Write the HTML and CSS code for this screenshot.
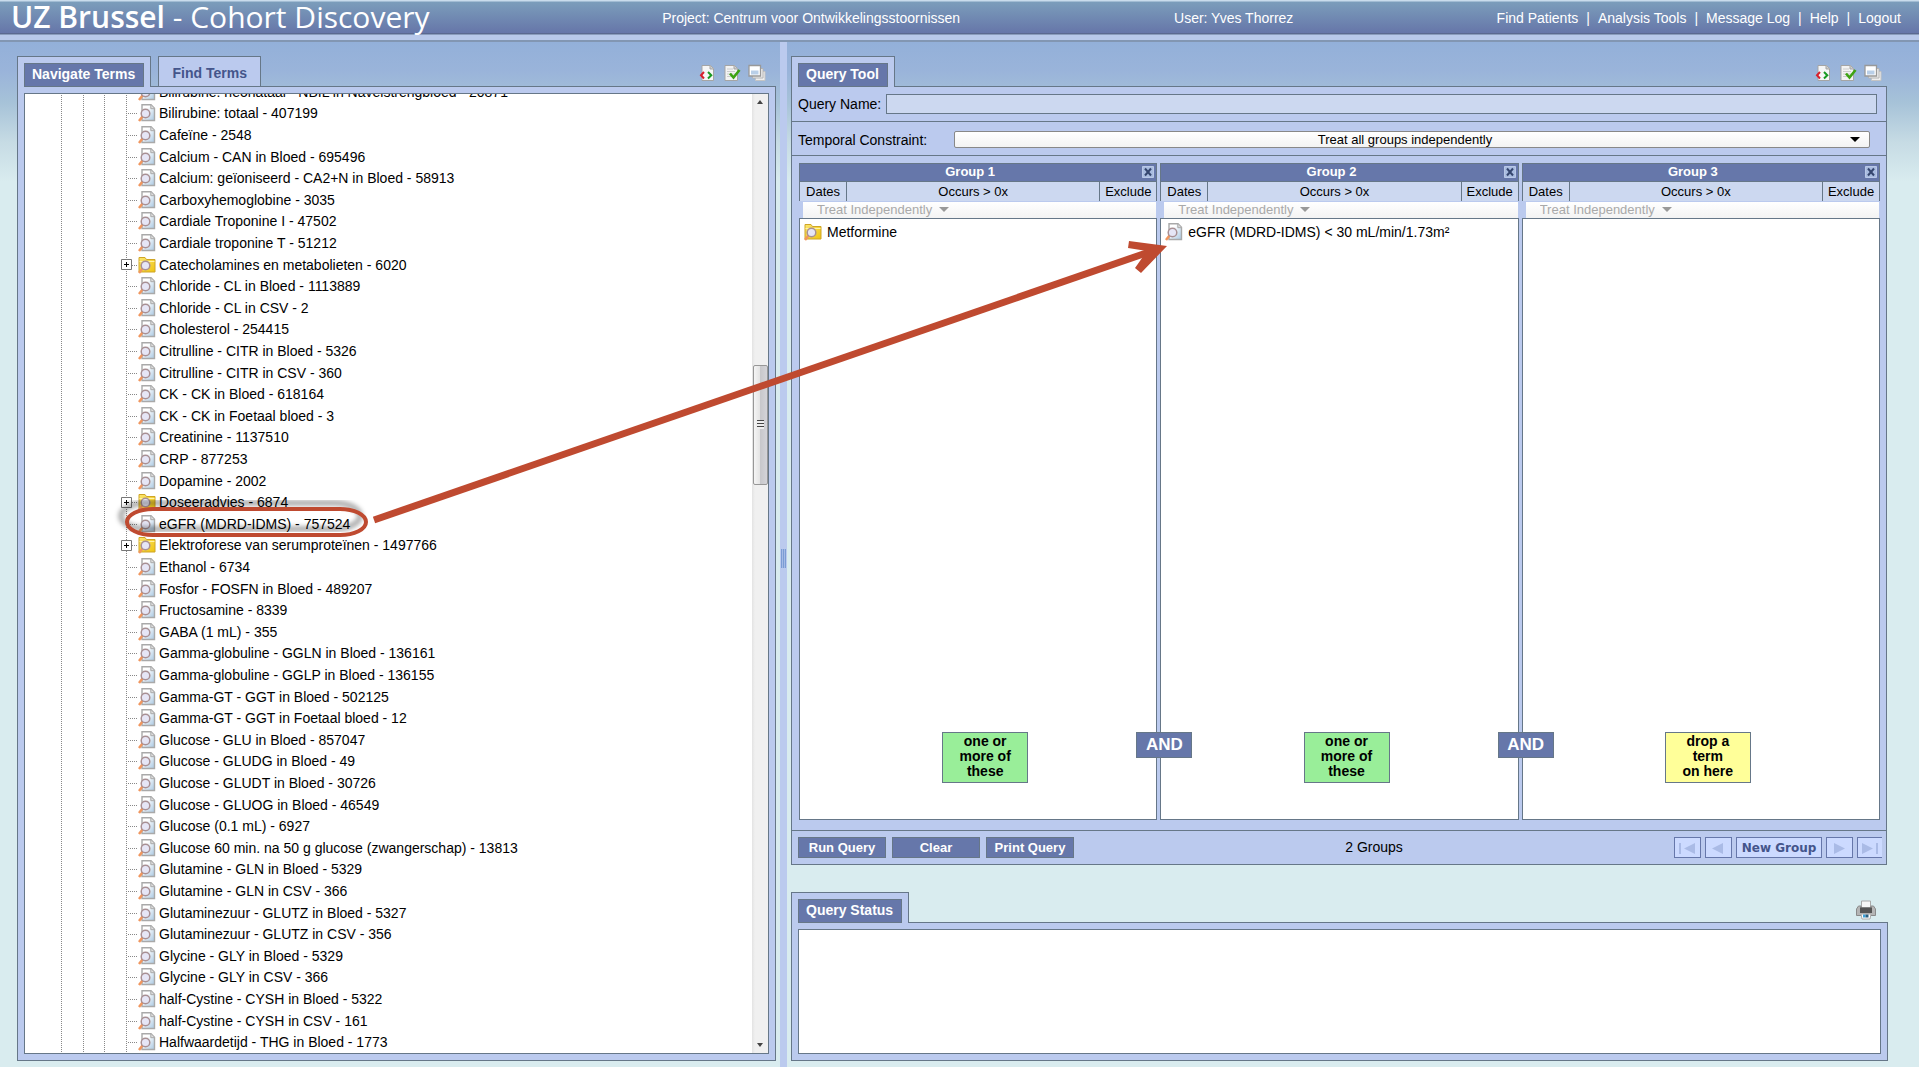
FILE: index.html
```html
<!DOCTYPE html>
<html lang="en">
<head>
<meta charset="utf-8">
<title>UZ Brussel - Cohort Discovery</title>
<link rel="stylesheet" href="styles.css">
</head>
<body>
<svg class="defs" aria-hidden="true">
  <defs>
    <linearGradient id="sheet" x1="0" y1="0" x2="1" y2="1"><stop offset=".3" stop-color="#fff"/><stop offset="1" stop-color="#a9c8e2"/></linearGradient>
    <linearGradient id="gold" x1="0" y1="0" x2="1" y2="1"><stop offset="0" stop-color="#fbe670"/><stop offset="1" stop-color="#efc410"/></linearGradient>
    <symbol id="lens" viewBox="0 0 18 18">
      <path d="M4.500 12.500 1 17" stroke="#f0965e" stroke-width="2.500"/>
      <circle cx="7.500" cy="9.500" r="4.300" fill="#e6e6f6" stroke="#a89094" stroke-width="1.500"/>
    </symbol>
    <symbol id="leaf" viewBox="0 0 18 18">
      <path d="M4 .8h9l3.500 3.500v12.200H4z" fill="url(#sheet)" stroke="#a9a9a9" stroke-width="1.400"/>
      <path d="M12.800 1v3.700h3.700" fill="#ddd" stroke="#a9a9a9"/>
      <use href="#lens"/>
    </symbol>
    <symbol id="folder" viewBox="0 0 18 18">
      <path d="M1 16V1.500h6l1.500 2h8.500V16z" fill="url(#gold)" stroke="#cfa526"/>
      <path d="M1.500 5.500h15" stroke="#fff3a8"/>
      <use href="#lens"/>
    </symbol>
    <symbol id="plus" viewBox="0 0 11 11">
      <path d="M.5.5h10v10H.5z" fill="#fff" stroke="#777"/><path d="M3 5.500h5M5.500 3v5" stroke="#000"/>
    </symbol>
    <symbol id="xml" viewBox="0 0 18 18">
      <path d="M4 1.500h8.500l3 3v12H4z" fill="#f6f6f6" stroke="#a5a5a5"/><path d="M12 1.500V5h3.500" fill="#ccc" stroke="#a5a5a5"/>
      <path d="M6 8 3 11.200 6 14.500" fill="none" stroke="#d8202c" stroke-width="2"/><path d="m10 8 3.300 3.200L10 14.500" fill="none" stroke="#189a20" stroke-width="2"/>
    </symbol>
    <symbol id="check" viewBox="0 0 18 18">
      <path d="M2 1.500h9.500l3 3v12H2z" fill="#f3f3f3" stroke="#a5a5a5"/><path d="M4 5h6M4 7.500h8M4 10h8M4 12.500h8" stroke="#ccc"/><path d="M11 1.500V5h3.500" fill="#ccc" stroke="#a5a5a5"/>
      <path d="m7 9.500 3.500 4L16.500 6" fill="none" stroke="#3da313" stroke-width="2.600"/>
    </symbol>
    <symbol id="stack" viewBox="0 0 18 18">
      <path d="M7.500 7.500h9.500v9H7.500z" fill="#eee" stroke="#c4c4c4"/><path d="M4.500 4.500h10.500v9.500H4.500z" fill="#eee" stroke="#b4b4b4"/>
      <path d="M1 1.500h11.500v10.500H1z" fill="#fff" stroke="#999" stroke-width="1.300"/><path d="M3 6.500h7.500v4H3z" fill="#b9cfe8"/>
    </symbol>
    <symbol id="printer" viewBox="0 0 20 20">
      <path d="M5.500 1h9v7h-9z" fill="#f7f7f7" stroke="#aaa"/>
      <path d="M2.500 6h2.500v2h10V6h2.500l2 3v6.500H.5V9z" fill="#b5b5b5" stroke="#8a8a8a"/><path d="M4 7.500h12v5.500H4z" fill="#555"/>
      <path d="M5 14h10l-1 5H6z" fill="#fff" stroke="#aaa"/><path d="M7 14.500h2.500v3H7z" fill="#3aa0d8"/><path d="M9.500 14.500h3v3h-3z" fill="#2a5f80"/>
    </symbol>
    <symbol id="cross" viewBox="0 0 12 12">
      <path d="M.5.5h11v11H.5z" fill="#a9bce0" stroke="#b9c8e8"/><path d="m3 2.500 6 7M9 2.500l-6 7" stroke="#35466f" stroke-width="2"/>
    </symbol>
  </defs>
</svg>

<header class="topbar">
  <h1 class="brand"><b>UZ Brussel</b> - Cohort Discovery</h1>
  <p class="project">Project: Centrum voor Ontwikkelingsstoornissen</p>
  <p class="user">User: Yves Thorrez</p>
  <nav class="links"><a href="#">Find Patients</a><i>|</i><a href="#">Analysis Tools</a><i>|</i><a href="#">Message Log</a><i>|</i><a href="#">Help</a><i>|</i><a href="#">Logout</a></nav>
</header>

<main class="workspace">
  <section class="pane pane-terms">
    <div class="tabs">
      <div class="tab tab-active"><button class="tab-label">Navigate Terms</button></div>
      <button class="tab tab-idle">Find Terms</button>
      <div class="tools">
        <button aria-label="Show XML"><svg><use href="#xml"/></svg></button><button aria-label="Options"><svg><use href="#check"/></svg></button><button aria-label="Resize"><svg><use href="#stack"/></svg></button>
      </div>
    </div>
    <div class="body body-terms">
      <div class="listbox">
        <ul class="tree">
          <li><svg><use href="#leaf"/></svg>Bilirubine: neonataal - NBIL in Navelstrengbloed - 20871</li>
          <li><svg><use href="#leaf"/></svg>Bilirubine: totaal - 407199</li>
          <li><svg><use href="#leaf"/></svg>Cafeïne - 2548</li>
          <li><svg><use href="#leaf"/></svg>Calcium - CAN in Bloed - 695496</li>
          <li><svg><use href="#leaf"/></svg>Calcium: geïoniseerd - CA2+N in Bloed - 58913</li>
          <li><svg><use href="#leaf"/></svg>Carboxyhemoglobine - 3035</li>
          <li><svg><use href="#leaf"/></svg>Cardiale Troponine I - 47502</li>
          <li><svg><use href="#leaf"/></svg>Cardiale troponine T - 51212</li>
          <li><button class="expand" aria-label="Expand"><svg><use href="#plus"/></svg></button><svg><use href="#folder"/></svg>Catecholamines en metabolieten - 6020</li>
          <li><svg><use href="#leaf"/></svg>Chloride - CL in Bloed - 1113889</li>
          <li><svg><use href="#leaf"/></svg>Chloride - CL in CSV - 2</li>
          <li><svg><use href="#leaf"/></svg>Cholesterol - 254415</li>
          <li><svg><use href="#leaf"/></svg>Citrulline - CITR in Bloed - 5326</li>
          <li><svg><use href="#leaf"/></svg>Citrulline - CITR in CSV - 360</li>
          <li><svg><use href="#leaf"/></svg>CK - CK in Bloed - 618164</li>
          <li><svg><use href="#leaf"/></svg>CK - CK in Foetaal bloed - 3</li>
          <li><svg><use href="#leaf"/></svg>Creatinine - 1137510</li>
          <li><svg><use href="#leaf"/></svg>CRP - 877253</li>
          <li><svg><use href="#leaf"/></svg>Dopamine - 2002</li>
          <li><button class="expand" aria-label="Expand"><svg><use href="#plus"/></svg></button><svg><use href="#folder"/></svg>Doseeradvies - 6874</li>
          <li><svg><use href="#leaf"/></svg>eGFR (MDRD-IDMS) - 757524</li>
          <li><button class="expand" aria-label="Expand"><svg><use href="#plus"/></svg></button><svg><use href="#folder"/></svg>Elektroforese van serumproteïnen - 1497766</li>
          <li><svg><use href="#leaf"/></svg>Ethanol - 6734</li>
          <li><svg><use href="#leaf"/></svg>Fosfor - FOSFN in Bloed - 489207</li>
          <li><svg><use href="#leaf"/></svg>Fructosamine - 8339</li>
          <li><svg><use href="#leaf"/></svg>GABA (1 mL) - 355</li>
          <li><svg><use href="#leaf"/></svg>Gamma-globuline - GGLN in Bloed - 136161</li>
          <li><svg><use href="#leaf"/></svg>Gamma-globuline - GGLP in Bloed - 136155</li>
          <li><svg><use href="#leaf"/></svg>Gamma-GT - GGT in Bloed - 502125</li>
          <li><svg><use href="#leaf"/></svg>Gamma-GT - GGT in Foetaal bloed - 12</li>
          <li><svg><use href="#leaf"/></svg>Glucose - GLU in Bloed - 857047</li>
          <li><svg><use href="#leaf"/></svg>Glucose - GLUDG in Bloed - 49</li>
          <li><svg><use href="#leaf"/></svg>Glucose - GLUDT in Bloed - 30726</li>
          <li><svg><use href="#leaf"/></svg>Glucose - GLUOG in Bloed - 46549</li>
          <li><svg><use href="#leaf"/></svg>Glucose (0.1 mL) - 6927</li>
          <li><svg><use href="#leaf"/></svg>Glucose 60 min. na 50 g glucose (zwangerschap) - 13813</li>
          <li><svg><use href="#leaf"/></svg>Glutamine - GLN in Bloed - 5329</li>
          <li><svg><use href="#leaf"/></svg>Glutamine - GLN in CSV - 366</li>
          <li><svg><use href="#leaf"/></svg>Glutaminezuur - GLUTZ in Bloed - 5327</li>
          <li><svg><use href="#leaf"/></svg>Glutaminezuur - GLUTZ in CSV - 356</li>
          <li><svg><use href="#leaf"/></svg>Glycine - GLY in Bloed - 5329</li>
          <li><svg><use href="#leaf"/></svg>Glycine - GLY in CSV - 366</li>
          <li><svg><use href="#leaf"/></svg>half-Cystine - CYSH in Bloed - 5322</li>
          <li><svg><use href="#leaf"/></svg>half-Cystine - CYSH in CSV - 161</li>
          <li><svg><use href="#leaf"/></svg>Halfwaardetijd - THG in Bloed - 1773</li>
        </ul>
        <div class="scrollbar" aria-hidden="true"><span class="caret caret-up"></span><span class="track-above"></span><span class="thumb"></span><span class="track-below"></span><span class="caret caret-down"></span></div>
      </div>
    </div>
  </section>

  <div class="splitter"><span class="grip"></span></div>

  <div class="right">
    <section class="pane pane-query">
      <div class="tabs">
        <div class="tab tab-active"><button class="tab-label">Query Tool</button></div>
        <div class="tools tools-query">
          <button aria-label="Show XML"><svg><use href="#xml"/></svg></button><button aria-label="Options"><svg><use href="#check"/></svg></button><button aria-label="Resize"><svg><use href="#stack"/></svg></button>
        </div>
      </div>
      <div class="body body-query">
        <div class="field field-name"><label for="qname">Query Name:</label><input id="qname" type="text"></div>
        <div class="field field-temporal"><label for="timing">Temporal Constraint:</label>
          <span class="pick"><select id="timing"><option>Treat all groups independently</option></select></span></div>
        <div class="groups">
          <article class="group">
            <h2>Group 1<button class="close" aria-label="Remove group 1"><svg><use href="#cross"/></svg></button></h2>
            <div class="limits"><button>Dates</button><button>Occurs &gt; 0x</button><button>Exclude</button></div>
            <div class="timing"><span class="pick"><select disabled aria-label="Group 1 timing"><option>Treat Independently</option></select></span></div>
            <div class="drop"><p class="concept"><svg><use href="#folder"/></svg>Metformine</p><p class="note">one or<br>more of<br>these</p><span class="and">AND</span></div>
          </article>
          <article class="group">
            <h2>Group 2<button class="close" aria-label="Remove group 2"><svg><use href="#cross"/></svg></button></h2>
            <div class="limits"><button>Dates</button><button>Occurs &gt; 0x</button><button>Exclude</button></div>
            <div class="timing"><span class="pick"><select disabled aria-label="Group 2 timing"><option>Treat Independently</option></select></span></div>
            <div class="drop"><p class="concept"><svg><use href="#leaf"/></svg>eGFR (MDRD-IDMS) &lt; 30 mL/min/1.73m²</p><p class="note">one or<br>more of<br>these</p><span class="and">AND</span></div>
          </article>
          <article class="group">
            <h2>Group 3<button class="close" aria-label="Remove group 3"><svg><use href="#cross"/></svg></button></h2>
            <div class="limits"><button>Dates</button><button>Occurs &gt; 0x</button><button>Exclude</button></div>
            <div class="timing"><span class="pick"><select disabled aria-label="Group 3 timing"><option>Treat Independently</option></select></span></div>
            <div class="drop"><p class="note note-empty">drop a<br>term<br>on here</p></div>
          </article>
        </div>
        <div class="actions">
          <div class="run"><button>Run Query</button><button>Clear</button><button>Print Query</button></div>
          <p class="count">2 Groups</p>
          <div class="pager">
            <button aria-label="First group"><svg viewBox="0 0 24 18"><path d="M4 4h2v11H4zM20 4v11L9 9.500z"/></svg></button>
            <button aria-label="Previous group"><svg viewBox="0 0 24 18"><path d="M17 4v11L6 9.500z"/></svg></button>
            <button class="new-group">New Group</button>
            <button aria-label="Next group"><svg viewBox="0 0 24 18"><path d="M7 4v11l11-5.500z"/></svg></button>
            <button class="last" aria-label="Last group"><svg viewBox="0 0 24 18"><path d="M4 4v11l11-5.500zM18 4h2v11h-2z"/></svg></button>
          </div>
        </div>
      </div>
    </section>

    <section class="pane pane-status">
      <div class="tabs">
        <div class="tab tab-active"><button class="tab-label">Query Status</button></div>
        <div class="tools tools-status"><button aria-label="Print"><svg><use href="#printer"/></svg></button></div>
      </div>
      <div class="body body-status"><div class="output"></div></div>
    </section>
  </div>
</main>

<svg class="callout" width="1919" height="1067" viewBox="0 0 1919 1067" aria-hidden="true">
  <defs><filter id="soft"><feGaussianBlur stdDeviation="2"/></filter></defs>
  <rect x="121" y="503" width="239" height="26" rx="26" ry="13" fill="none" stroke="#000" stroke-opacity=".3" stroke-width="6" filter="url(#soft)"/>
  <rect x="127" y="509" width="239" height="26" rx="26" ry="13" fill="none" stroke="#bf4a30" stroke-width="4"/>
  <path d="M374 520 1152 251" fill="none" stroke="#bf4a30" stroke-width="7"/>
  <path d="m1167 246-38-5-1 7 19 3-12 17 6 5z" fill="#bf4a30"/>
</svg>
</body>
</html>
```
FILE: styles.css
```css
* { box-sizing: border-box; margin: 0; padding: 0; }
:root {
  --line: #667788;
  --panel: #bbcaee;
  --field: #ccd8f0;
  --accent: #6677aa;
}
body {
  display: flex;
  flex-direction: column;
  height: 100vh;
  overflow: hidden;
  font: 14px/16px "Liberation Sans", Arial, sans-serif;
  color: #000;
  background: #d9ecef;
}
button, input, select { font: inherit; color: inherit; background: none; border: 0; border-radius: 0; }
.defs { position: absolute; width: 0; height: 0; }

/* top bar */
.topbar {
  display: grid;
  grid-template-columns: minmax(0, 650fr) minmax(0, 511fr) minmax(0, 322fr) auto;
  align-items: center;
  flex: none;
  height: 42px;
  padding: 0 18px 6px 11px;
  color: #fff;
  white-space: nowrap;
  background: linear-gradient(#c9dcec 0 1px, #7b9dbb 2px, #6676a9 33px, #5a6890 33px 34px, #8a9cbc 34px 35px, #b8c8ea 35px 40px, #8296b2 40px);
}
.brand { font: 400 30px/34px "Open Sans", "Noto Sans", sans-serif; padding-bottom: 2px; }
.brand b { font-weight: 600; }
.links { display: flex; gap: 8px; }
.links a { color: inherit; text-decoration: none; }
.links i { font-style: normal; }

/* workspace */
.workspace {
  display: grid;
  grid-template-columns: minmax(0, 780fr) 7px minmax(0, 1132fr);
  flex: 1;
  min-height: 0;
  background: linear-gradient(#93b0d9, #9ab4da 30px, #a6c2d8 60px, #c6dbe4 100px, #d9ecef 140px);
}
.pane { display: flex; flex-direction: column; min-height: 0; }
.pane-terms { padding: 14px 4px 6px 17px; }
.right { display: flex; flex-direction: column; min-height: 0; padding: 14px 32px 6px 4px; }
.splitter { display: flex; align-items: center; justify-content: center; padding-top: 8px; background: var(--panel); }
.grip { width: 5px; height: 19px; background: linear-gradient(90deg, #7b9cd4 0 1px, #a5bbe6 1px 2px, #7b9cd4 2px 3px, #a5bbe6 3px 4px, #7b9cd4 4px); }

.tabs { display: flex; position: relative; z-index: 1; margin-bottom: -1px; height: 31px; flex: none; }
.tab { border: 1px solid var(--line); border-bottom: 0; background: var(--panel); }
.tab-active { padding: 6px 6px 0; }
.tab-label { display: block; height: 24px; padding: 0 8px 2px 7px; border: 1px solid var(--line); background: var(--accent); color: #fff; font-weight: bold; }
.tab-idle { height: 30px; width: 103px; margin-left: 7px; padding-top: 3px; color: #44558b; font-weight: bold; }
.tools { display: flex; gap: 7px; margin-left: auto; padding: 8px 10px 0 0; }
.tools-query { padding-right: 5px; }
.tools button { width: 18px; height: 18px; }
.tools svg { display: block; width: 18px; height: 18px; }
.tools-status button, .tools-status svg { width: 20px; height: 20px; }
.tools-status { padding-right: 12px; }
.body { display: flex; flex-direction: column; flex: 1; min-height: 0; border: 1px solid var(--line); background: var(--panel); }
.body-terms, .body-status { padding: 6px; }

/* term tree */
.listbox { display: flex; flex: 1; min-height: 0; overflow: hidden; border: 1px solid var(--line); background: #fff; }
.tree {
  --dots: repeating-linear-gradient(#888 0 1px, transparent 1px 2px);
  display: grid;
  grid-template-rows: repeat(45, minmax(20px, 1fr));
  flex: 1;
  height: calc(100% + 13px);
  margin-top: -13px;
  list-style: none;
  background: var(--dots) 36px 0 / 1px 100% no-repeat, var(--dots) 58px 0 / 1px 100% no-repeat, var(--dots) 79px 0 / 1px 100% no-repeat, var(--dots) 101px 0 / 1px 100% no-repeat;
}
.tree li { position: relative; display: flex; align-items: center; padding-left: 113px; white-space: nowrap; }
.tree li::before { content: ""; position: absolute; left: 103px; top: 50%; width: 9px; border-top: 1px dotted #888; }
.tree svg, .concept svg { flex: none; width: 18px; height: 18px; margin-right: 3px; }
.expand { position: absolute; left: 96px; width: 11px; height: 11px; }
.tree .expand svg { display: block; width: 11px; height: 11px; }
.scrollbar { display: flex; flex-direction: column; align-items: center; width: 16px; padding: 6px 0; background: linear-gradient(90deg, #e3e3e3, #f0f0f0 3px); }
.caret { border: 3px solid transparent; }
.caret-up { border-top: 0; border-bottom: 4px solid #444; }
.caret-down { border-bottom: 0; border-top: 4px solid #444; }
.track-above { flex: 261 1 0; }
.track-below { flex: 559 1 0; }
.thumb { flex: 118 1 0; width: 15px; border: 1px solid #979797; border-radius: 2px; background: repeating-linear-gradient(#444 0 1px, #eee 1px 3px) center / 7px 9px no-repeat, linear-gradient(90deg, #f5f5f5, #e4e4e4 45%, #c8c8cb 50%, #d4d4d8); }

/* query tool */
.pane-query { flex: 1; }
.field { display: flex; align-items: center; flex: none; padding-left: 6px; border-bottom: 1px solid var(--line); }
.field-name { height: 35px; padding-right: 9px; gap: 5px; }
.field-name input { flex: 1; height: 20px; padding: 0 4px; border: 1px solid var(--line); background: var(--field); }
.field-temporal { height: 34px; padding-top: 2px; padding-right: 16px; }
.field-temporal label { flex: 0 0 156px; }
.pick { position: relative; display: flex; align-items: center; }
.pick select { width: 100%; appearance: none; }
.pick::after { content: ""; position: absolute; right: 10px; border: 5px solid transparent; border-top-color: #000; border-bottom: 0; pointer-events: none; }
.field-temporal .pick { flex: 1; }
.field-temporal select { height: 17px; padding-right: 14px; border: 1px solid #888; border-radius: 2px; background: linear-gradient(#fff, #f3f3f3); font-size: 13px; text-align: center; text-align-last: center; }

.groups { display: grid; grid-template-columns: repeat(3, minmax(0, 1fr)); gap: 3px; flex: 1; min-height: 0; padding: 7px 6px 10px 7px; }
.group { display: flex; flex-direction: column; min-height: 0; }
.group h2 { position: relative; height: 19px; border: 1px solid var(--line); background: var(--accent); color: #fff; font-size: 13px; line-height: 16px; text-align: center; padding-right: 16px; }
.close { position: absolute; right: 2px; top: 2px; width: 12px; height: 12px; }
.close svg { display: block; width: 12px; height: 12px; }
.limits { display: grid; grid-template-columns: 47px 1fr 56px; height: 19px; border: 1px solid var(--line); border-top: 0; border-bottom: 0; background: var(--field); }
.limits button { font-size: 13px; line-height: 19px; border-right: 1px solid var(--line); }
.limits button:last-child { border-right: 0; }
.timing { height: 16px; margin: 1px 1px 0 4px; padding: 0 0 1px 14px; background: linear-gradient(#fff, #f3f3f3); display: flex; align-items: center; }
.timing .pick { padding-right: 16px; }
.timing select { color: #a9a9a9; opacity: 1; font-size: 13px; line-height: 15px; height: 15px; }
.timing .pick::after { right: 0; border-top-color: #999; }
.drop { position: relative; flex: 1; border: 1px solid var(--line); background: #fff; }
.concept { display: flex; align-items: center; padding: 4px; }
.concept svg { margin-right: 5px; }
.note { position: absolute; right: calc(50% - 50px); bottom: 36px; width: 86px; height: 51px; border: 1px solid var(--line); background: #99ee99; font-size: 14px; line-height: 15px; font-weight: bold; text-align: center; padding-top: 1px; }
.note-empty { background: #ffff99; }
.and { position: absolute; z-index: 1; right: -36px; bottom: 61px; width: 56px; height: 26px; border: 1px solid var(--line); background: var(--accent); color: #fff; font-size: 17px; line-height: 24px; font-weight: bold; text-align: center; }

.actions { display: grid; grid-template-columns: auto 1fr auto; align-items: center; height: 34px; flex: none; border-top: 1px solid var(--line); padding: 0 4px 0 6px; }
.run { display: flex; gap: 6px; }
.run button { width: 88px; height: 21px; border: 1px solid var(--line); background: var(--accent); color: #fff; font-size: 13px; font-weight: bold; }
.count { text-align: center; padding-bottom: 2px; }
.pager { display: flex; gap: 4px; justify-content: flex-end; }
.pager button { width: 27px; height: 21px; border: 1px solid var(--accent); background: #ccdaff; color: #44558b; }
.pager svg { display: block; width: 24px; height: 18px; fill: #aabbe6; }
.pager .new-group { width: 86px; font: bold 12px "DejaVu Sans", Verdana, sans-serif; }
.pager .last { border-right: 0; width: 25px; }

/* query status */
.pane-status { flex: none; margin-top: 27px; margin-right: -1px; }
.body-status { height: 139px; flex: none; }
.output { flex: 1; border: 1px solid var(--line); background: #fff; }

.callout { position: absolute; left: 0; top: 0; pointer-events: none; z-index: 5; }
```
